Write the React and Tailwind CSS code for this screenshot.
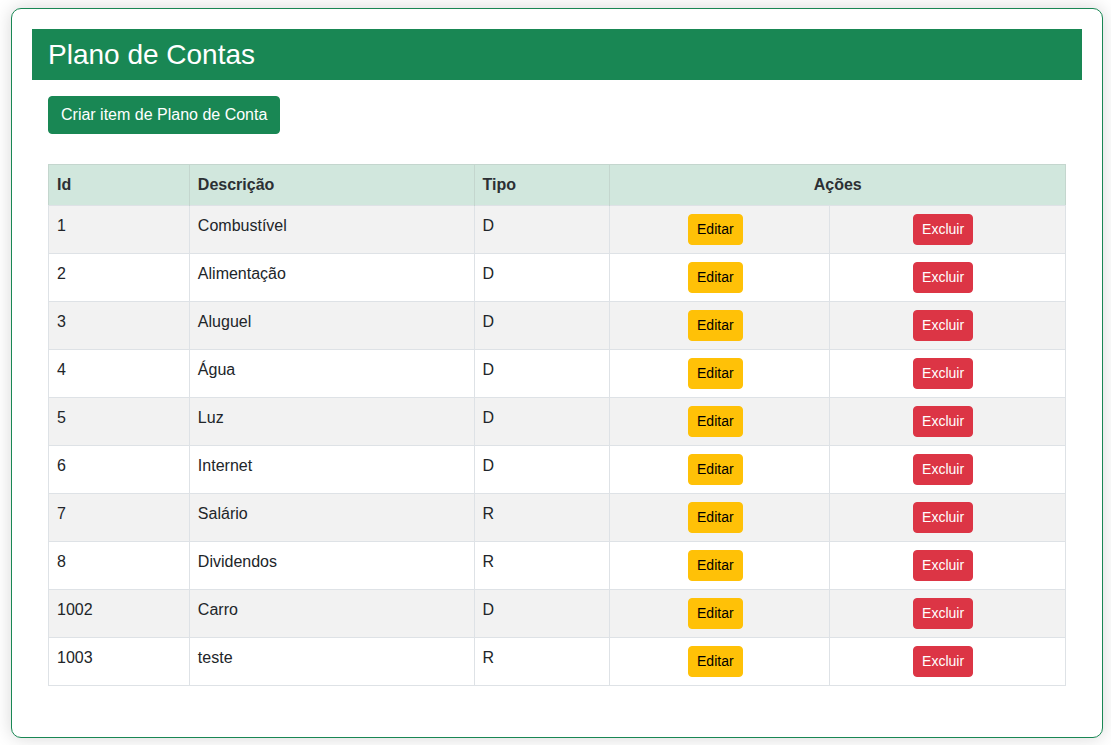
import React from "react";

const rows = [
  ["1", "Combustível", "D"],
  ["2", "Alimentação", "D"],
  ["3", "Aluguel", "D"],
  ["4", "Água", "D"],
  ["5", "Luz", "D"],
  ["6", "Internet", "D"],
  ["7", "Salário", "R"],
  ["8", "Dividendos", "R"],
  ["1002", "Carro", "D"],
  ["1003", "teste", "R"],
];

export default function App() {
  return (
    <div
      className="min-h-[745px] bg-white pl-[11px] pt-[8px] text-[#212529]"
      style={{ fontFamily: '"Liberation Sans", Arial, sans-serif' }}
    >
      <div className="w-[1092px] h-[730px] rounded-[10px] border border-[#198754] bg-white p-[20px] shadow-[0_0_18px_rgba(0,0,0,0.16)]">
        <div className="h-[51px] bg-[#198754] pl-[16px] flex items-center">
          <h1 className="text-[28px] leading-none text-white">Plano de Contas</h1>
        </div>
        <div className="p-[16px]">
          <button className="h-[38px] rounded-[4px] border border-[#198754] bg-[#198754] px-[12px] text-[16px] text-white">
            Criar item de Plano de Conta
          </button>
          <table className="mt-[30px] w-[1018px] border-collapse text-[16px] leading-[24px]">
            <thead>
              <tr className="bg-[#d1e7dd] border border-[#c4d6ce] border-b-[#b9cbc3]">
                <th className="w-[141px] border-r border-[#c4d6ce] px-[8px] py-[8px] text-left font-bold text-[#2c3034]">Id</th>
                <th className="w-[285px] border-r border-[#c4d6ce] px-[8px] py-[8px] text-left font-bold text-[#2c3034]">Descrição</th>
                <th className="w-[136px] border-r border-[#c4d6ce] px-[8px] py-[8px] text-left font-bold text-[#2c3034]">Tipo</th>
                <th colSpan={2} className="px-[8px] py-[8px] text-center font-bold text-[#2c3034]">Ações</th>
              </tr>
            </thead>
            <tbody>
              {rows.map((r, i) => (
                <tr key={r[0]} className={i % 2 === 0 ? "bg-[#f2f2f2]" : "bg-white"}>
                  <td className="w-[141px] h-[48px] border border-[#dee2e6] px-[8px] pt-[8px] align-top">{r[0]}</td>
                  <td className="w-[285px] border border-[#dee2e6] px-[8px] pt-[8px] align-top">{r[1]}</td>
                  <td className="w-[136px] border border-[#dee2e6] px-[8px] pt-[8px] align-top">{r[2]}</td>
                  <td className="w-[220px] border border-[#dee2e6] px-[8px] pt-[8px] pb-[7px] align-top text-center">
                    <button className="mr-[9px] h-[31px] rounded-[4px] border border-[#ffc107] bg-[#ffc107] px-[8px] text-[14px] leading-[21px] text-black">
                      Editar
                    </button>
                  </td>
                  <td className="w-[236px] border border-[#dee2e6] px-[8px] pt-[8px] pb-[7px] align-top text-center">
                    <button className="mr-[9px] h-[31px] rounded-[4px] border border-[#dc3545] bg-[#dc3545] px-[8px] text-[14px] leading-[21px] text-white">
                      Excluir
                    </button>
                  </td>
                </tr>
              ))}
            </tbody>
          </table>
        </div>
      </div>
    </div>
  );
}
